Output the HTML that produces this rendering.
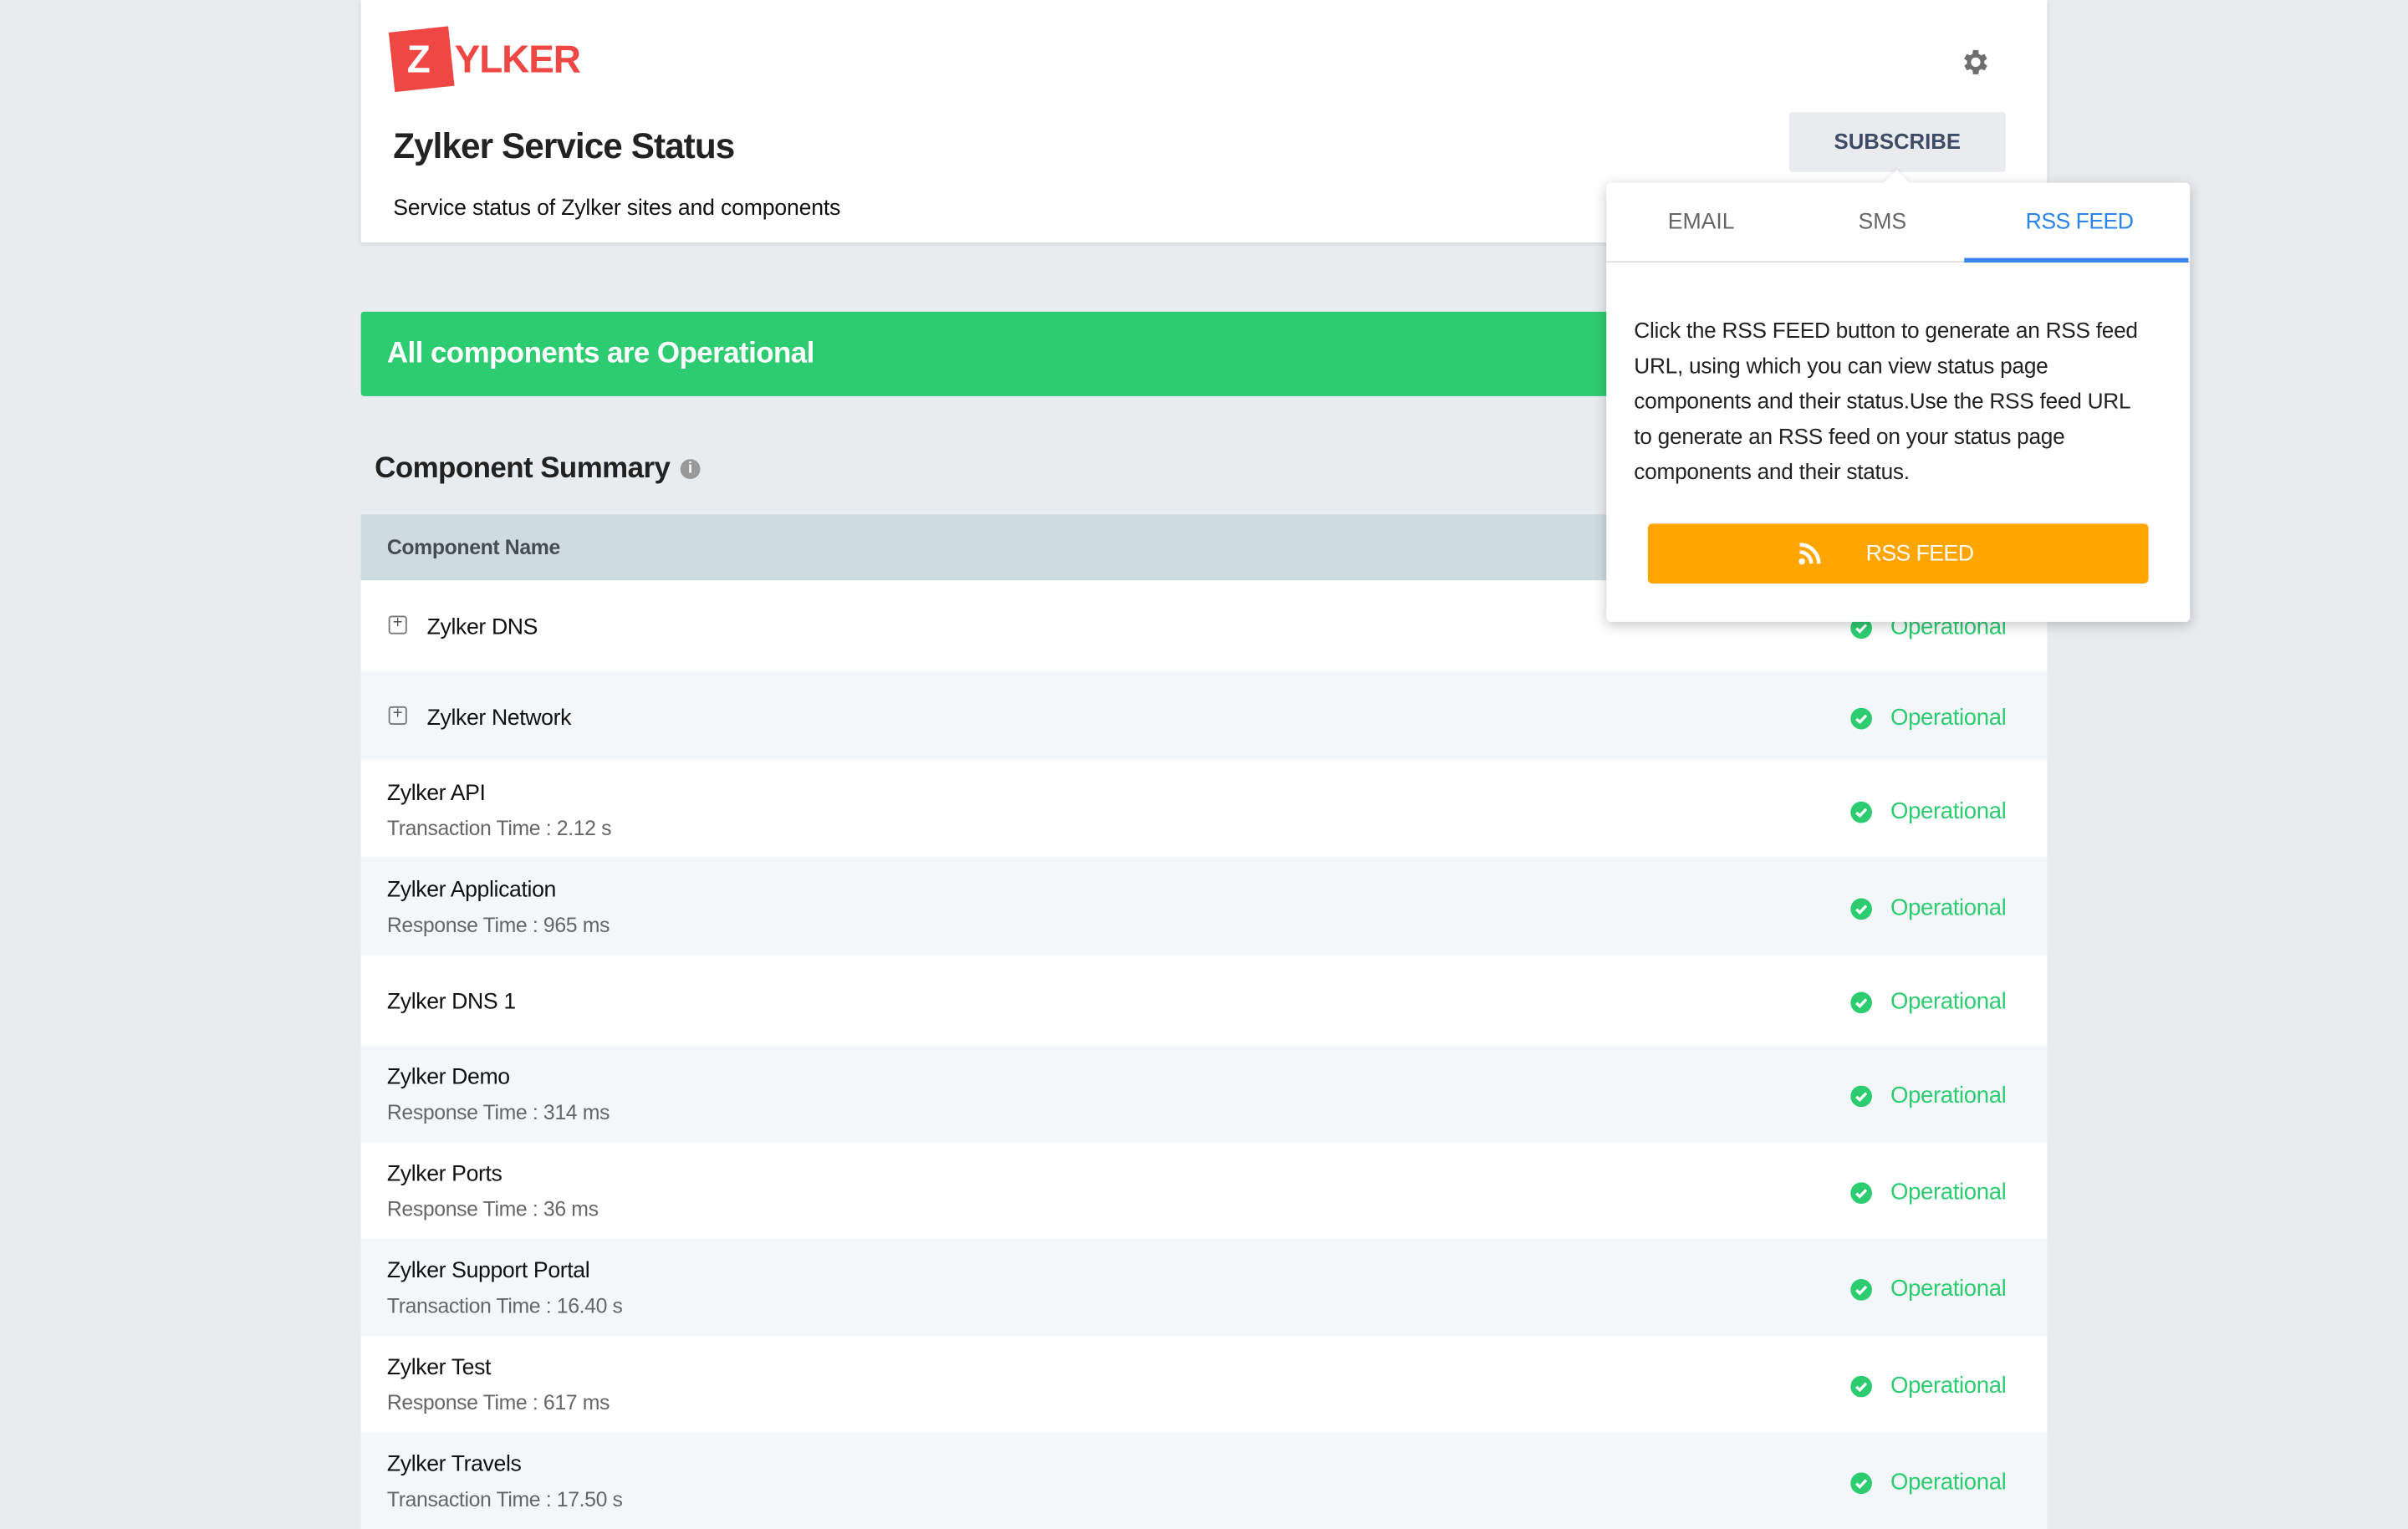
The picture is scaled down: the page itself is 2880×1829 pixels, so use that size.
<!DOCTYPE html>
<html><head><meta charset="utf-8"><style>
*{margin:0;padding:0;box-sizing:border-box}
html,body{width:2880px;height:1800px;overflow:hidden;background:#e9ecee}
#s{position:absolute;left:0;top:0;width:1568px;height:980px;transform:scale(1.836735);transform-origin:0 0;font-family:"Liberation Sans",sans-serif;color:#222}
.a{position:absolute;white-space:nowrap}
.card{position:absolute;left:235px;top:0;width:1098px;height:158px;background:#fff;box-shadow:0 1px 3px rgba(0,0,0,.12)}
.row{position:absolute;left:235px;width:1098px}
.n{position:absolute;left:17px;font-size:14.5px;color:#111;letter-spacing:-.2px;margin-top:2px}
.sub{position:absolute;left:17px;font-size:13.5px;color:#666;letter-spacing:-.2px;margin-top:1px}
.st{position:absolute;left:996px;font-size:15px;color:#2ecc71;letter-spacing:-.2px;margin-top:1px}
.st svg{position:absolute;left:-26px;top:2px}
.plus{position:absolute;left:18px;width:12px;height:12px;border:1.3px solid #777;border-radius:2px;font-size:11px;line-height:9px;text-align:center;color:#555}
</style></head><body><div id="s">
<div class="card">
  <div class="a" style="left:20px;top:19px;width:39px;height:39px;background:#ef4844;transform:rotate(-6deg)"></div>
  <div class="a" style="left:30px;top:25px;font-size:25px;font-weight:bold;color:#fff">Z</div>
  <div class="a" style="left:61px;top:25px;font-size:25px;font-weight:bold;color:#ef4844;letter-spacing:-.6px">YLKER</div>
  <div class="a" style="left:21px;top:82px;font-size:23px;font-weight:bold;color:#222;letter-spacing:-.5px">Zylker Service Status</div>
  <div class="a" style="left:21px;top:128px;font-size:14.5px;color:#111;letter-spacing:-.1px">Service status of Zylker sites and components</div>
  <svg class="a" style="left:1041px;top:30px" width="21" height="21" viewBox="0 0 24 24"><path fill="#6f6f6f" d="M19.4 13a7.5 7.5 0 000-2l2.1-1.6-2-3.5-2.5 1a7 7 0 00-1.7-1L15 3h-4l-.4 2.9a7 7 0 00-1.7 1l-2.5-1-2 3.5L6.6 11a7.5 7.5 0 000 2l-2.1 1.6 2 3.5 2.5-1a7 7 0 001.7 1L11 21h4l.4-2.9a7 7 0 001.7-1l2.5 1 2-3.5zM13 15.5a3.5 3.5 0 110-7 3.5 3.5 0 010 7z" transform="translate(-1 0)"/></svg>
  <div class="a" style="left:930px;top:73px;width:141px;height:39px;background:#e9ebee;border-radius:2px;color:#3d4b66;font-weight:bold;font-size:14px;text-align:center;line-height:39px">SUBSCRIBE</div>
</div>
<div class="a" style="left:235px;top:203px;width:1098px;height:55px;background:#2ecc71;border-radius:2px"></div>
<div class="a" style="left:252px;top:220px;font-size:19px;font-weight:bold;color:#fff;letter-spacing:-.3px">All components are Operational</div>
<div class="a" style="left:244px;top:295px;font-size:19px;font-weight:bold;color:#222;letter-spacing:-.3px">Component Summary</div>
<div class="a" style="left:443px;top:299px;width:13px;height:13px;border-radius:50%;background:#999;color:#fff;font-size:10px;font-weight:bold;text-align:center;line-height:13px">i</div>
<div class="a" style="left:235px;top:335px;width:1098px;height:43px;background:#cfdbe2"></div>
<div class="a" style="left:252px;top:349px;font-size:13.5px;font-weight:bold;color:#444c55;letter-spacing:-.2px">Component Name</div>

<div class="row" style="top:378px;height:59px;background:#fff"><div class="plus" style="top:23px">+</div><div class="n" style="left:43px;top:21px">Zylker DNS</div><div class="st" style="top:21px"><svg width="14" height="14" viewBox="0 0 14 14"><circle cx="7" cy="7" r="7" fill="#2ecc71"/><path d="M3.8 7.2l2.2 2.1 4.2-4.4" stroke="#fff" stroke-width="1.8" fill="none"/></svg>Operational</div></div>
<div class="row" style="top:437px;height:58px;background:#f4f7f9"><div class="plus" style="top:23px">+</div><div class="n" style="left:43px;top:21px">Zylker Network</div><div class="st" style="top:21px"><svg width="14" height="14" viewBox="0 0 14 14"><circle cx="7" cy="7" r="7" fill="#2ecc71"/><path d="M3.8 7.2l2.2 2.1 4.2-4.4" stroke="#fff" stroke-width="1.8" fill="none"/></svg>Operational</div></div>
<div class="row" style="top:495px;height:63px;background:#fff"><div class="n" style="top:12px">Zylker API</div><div class="sub" style="top:36px">Transaction Time : 2.12 s</div><div class="st" style="top:24px"><svg width="14" height="14" viewBox="0 0 14 14"><circle cx="7" cy="7" r="7" fill="#2ecc71"/><path d="M3.8 7.2l2.2 2.1 4.2-4.4" stroke="#fff" stroke-width="1.8" fill="none"/></svg>Operational</div></div>
<div class="row" style="top:558px;height:64px;background:#f4f7f9"><div class="n" style="top:12px">Zylker Application</div><div class="sub" style="top:36px">Response Time : 965 ms</div><div class="st" style="top:24px"><svg width="14" height="14" viewBox="0 0 14 14"><circle cx="7" cy="7" r="7" fill="#2ecc71"/><path d="M3.8 7.2l2.2 2.1 4.2-4.4" stroke="#fff" stroke-width="1.8" fill="none"/></svg>Operational</div></div>
<div class="row" style="top:622px;height:59px;background:#fff"><div class="n" style="top:21px">Zylker DNS 1</div><div class="st" style="top:21px"><svg width="14" height="14" viewBox="0 0 14 14"><circle cx="7" cy="7" r="7" fill="#2ecc71"/><path d="M3.8 7.2l2.2 2.1 4.2-4.4" stroke="#fff" stroke-width="1.8" fill="none"/></svg>Operational</div></div>
<div class="row" style="top:681px;height:63px;background:#f4f7f9"><div class="n" style="top:11px">Zylker Demo</div><div class="sub" style="top:35px">Response Time : 314 ms</div><div class="st" style="top:23px"><svg width="14" height="14" viewBox="0 0 14 14"><circle cx="7" cy="7" r="7" fill="#2ecc71"/><path d="M3.8 7.2l2.2 2.1 4.2-4.4" stroke="#fff" stroke-width="1.8" fill="none"/></svg>Operational</div></div>
<div class="row" style="top:744px;height:63px;background:#fff"><div class="n" style="top:11px">Zylker Ports</div><div class="sub" style="top:35px">Response Time : 36 ms</div><div class="st" style="top:23px"><svg width="14" height="14" viewBox="0 0 14 14"><circle cx="7" cy="7" r="7" fill="#2ecc71"/><path d="M3.8 7.2l2.2 2.1 4.2-4.4" stroke="#fff" stroke-width="1.8" fill="none"/></svg>Operational</div></div>
<div class="row" style="top:807px;height:63px;background:#f4f7f9"><div class="n" style="top:11px">Zylker Support Portal</div><div class="sub" style="top:35px">Transaction Time : 16.40 s</div><div class="st" style="top:23px"><svg width="14" height="14" viewBox="0 0 14 14"><circle cx="7" cy="7" r="7" fill="#2ecc71"/><path d="M3.8 7.2l2.2 2.1 4.2-4.4" stroke="#fff" stroke-width="1.8" fill="none"/></svg>Operational</div></div>
<div class="row" style="top:870px;height:63px;background:#fff"><div class="n" style="top:11px">Zylker Test</div><div class="sub" style="top:35px">Response Time : 617 ms</div><div class="st" style="top:23px"><svg width="14" height="14" viewBox="0 0 14 14"><circle cx="7" cy="7" r="7" fill="#2ecc71"/><path d="M3.8 7.2l2.2 2.1 4.2-4.4" stroke="#fff" stroke-width="1.8" fill="none"/></svg>Operational</div></div>
<div class="row" style="top:933px;height:63px;background:#f4f7f9"><div class="n" style="top:11px">Zylker Travels</div><div class="sub" style="top:35px">Transaction Time : 17.50 s</div><div class="st" style="top:23px"><svg width="14" height="14" viewBox="0 0 14 14"><circle cx="7" cy="7" r="7" fill="#2ecc71"/><path d="M3.8 7.2l2.2 2.1 4.2-4.4" stroke="#fff" stroke-width="1.8" fill="none"/></svg>Operational</div></div>

<div class="a" style="left:1046px;top:119px;width:380px;height:286px;background:#fff;border-radius:3px;box-shadow:0 2px 8px rgba(0,0,0,.22)">
  <div class="a" style="left:183px;top:-6px;width:12px;height:12px;background:#fff;transform:rotate(45deg);box-shadow:-1px -1px 2px rgba(0,0,0,.06)"></div>
  <div class="a" style="left:0;top:51px;width:380px;height:1px;background:#ddd"></div>
  <div class="a" style="left:233px;top:49px;width:146px;height:3px;background:#3b86ee"></div>
  <div class="a" style="left:40px;top:18px;font-size:14.5px;color:#666">EMAIL</div>
  <div class="a" style="left:164px;top:18px;font-size:14.5px;color:#666">SMS</div>
  <div class="a" style="left:273px;top:18px;font-size:14.5px;color:#2b84ea;letter-spacing:-.3px">RSS FEED</div>
  <div class="a" style="left:18px;top:86px;font-size:14.3px;line-height:23px;color:#222;letter-spacing:-.15px">Click the RSS FEED button to generate an RSS feed<br>URL, using which you can view status page<br>components and their status.Use the RSS feed URL<br>to generate an RSS feed on your status page<br>components and their status.</div>
  <div class="a" style="left:27px;top:222px;width:326px;height:39px;background:#ffa500;border-radius:3px">
    <svg class="a" style="left:98px;top:12px" width="15" height="15" viewBox="0 0 16 16"><circle cx="2.5" cy="13.5" r="2.2" fill="#fff"/><path d="M1 7a8 8 0 018 8" stroke="#fff" stroke-width="2.6" fill="none"/><path d="M1 1.8a13.2 13.2 0 0113.2 13.2" stroke="#fff" stroke-width="2.6" fill="none"/></svg>
    <div class="a" style="left:142px;top:12px;font-size:14.5px;color:#fff;letter-spacing:-.3px">RSS FEED</div>
  </div>
</div>
</div></body></html>
